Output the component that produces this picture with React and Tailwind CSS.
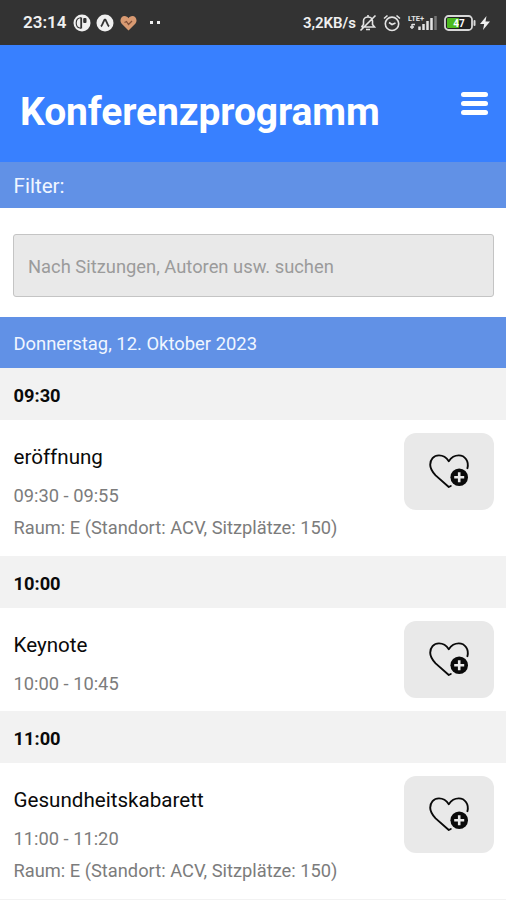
import React, { useState } from "react";

const slots = [
  {
    start: "09:30",
    title: "eröffnung",
    time: "09:30 - 09:55",
    room: "Raum: E (Standort: ACV, Sitzplätze: 150)",
  },
  {
    start: "10:00",
    title: "Keynote",
    time: "10:00 - 10:45",
  },
  {
    start: "11:00",
    title: "Gesundheitskabarett",
    time: "11:00 - 11:20",
    room: "Raum: E (Standort: ACV, Sitzplätze: 150)",
  },
];

const HeartPlus = () => (
  <svg className="-mt-[2px] ml-px" width="42" height="36" viewBox="0 0 42 36" fill="none">
    <path
      d="M38.4 15.2C40.2 8.5 36 2.4 29.8 2.4c-4.6 0-7.6 2.1-10 5.8C17.4 4.5 14.4 2.4 10 2.4 4.6 2.4 1.2 6.6 1.2 11.8c0 4.2 2.400 7.400 5.400 10.600L19.800 34l2-1"
      stroke="#0a0a0a"
      strokeWidth="1.9"
      strokeLinejoin="round"
      strokeLinecap="round"
    />
    <circle cx="30.2" cy="24.2" r="8.8" fill="#0a0a0a" />
    <path d="M30.2 19.2v10M25.2 24.2h10" stroke="#e9e9e9" strokeWidth="2.6" />
  </svg>
);

const StatusBar = () => (
  <div className="flex h-[45px] items-center bg-[#333333] pl-[23px] pr-4 text-[#f0f0f0]">
    <span className="w-[43px] whitespace-nowrap pt-px text-[17px] font-semibold">23:14</span>
    <svg className="ml-[7px]" width="18" height="18" viewBox="0 0 18 18">
      <circle cx="9" cy="9" r="8.5" fill="#f0f0f0" />
      <path d="M8 3.8C4 4 3.2 6.5 3.2 9s.8 5 4.8 5.2" stroke="#333" strokeWidth="1.1" fill="none" />
      <path d="M8.2 3.5v11" stroke="#333" strokeWidth="1.8" />
      <rect x="10.200" y="4" width="3.300" height="5" rx="1" fill="#333" />
    </svg>
    <svg className="ml-[5px]" width="18" height="18" viewBox="0 0 18 18">
      <circle cx="9" cy="9" r="8.5" fill="#f0f0f0" />
      <path d="M5 12.5C7 10.5 7.8 5.5 9 5.5s2 5 4 7" stroke="#333" strokeWidth="1.9" fill="none" />
    </svg>
    <svg className="ml-[6px]" width="17" height="16" viewBox="0 0 17 16">
      <path d="M8.5 15.5L1.5 8.5C-1 5 1.5 1 4.5 1c2 0 3.2 1 4 2.2C9.3 2 10.5 1 12.5 1c3 0 5.500 4 3 7.500z" fill="#d99a72" />
      <path d="M4.500 7.500l2-1 2 3 3.500-3.500" stroke="#805039" strokeWidth="1.300" fill="none" />
    </svg>
    <div className="ml-[13px] flex gap-[4px]">
      <span className="size-[3px] bg-[#f0f0f0]" />
      <span className="size-[3px] bg-[#f0f0f0]" />
    </div>

    <span className="ml-auto whitespace-nowrap pt-[2px] text-[15px] font-semibold">3,2KB/s</span>
    {/* muted bell */}
    <svg className="ml-[3px]" width="18" height="18" viewBox="0 0 18 18" fill="none" stroke="#e4e4e4" strokeWidth="1.6">
      <path d="M2.5 13h13L13.5 10.5V7c0-2.5-2-4-4.5-4S4.5 4.5 4.5 7v3.5L2.5 13M7 15.5h4M9 3V1M16.5 1.5l-15 15" />
    </svg>
    {/* alarm */}
    <svg className="ml-[6px]" width="18" height="18" viewBox="0 0 18 18" fill="none" stroke="#e4e4e4" strokeWidth="1.6">
      <circle cx="9" cy="9.8" r="6.7" />
      <path d="M6 8.5l3 2 3.5-1.5M1 4.5L4.5 1.5M17 4.5L13.5 1.5" />
    </svg>
    <svg className="ml-[7px]" width="30" height="18" viewBox="0 0 30 18">
      <text x="0" y="7" fontSize="8" fontWeight="700" fill="#e4e4e4" textLength="16" lengthAdjust="spacingAndGlyphs">LTE+</text>
      <path d="M4 10v5M4 10.5h3M2 13h4" stroke="#e4e4e4" strokeWidth="1.4" />
      <path d="M11.5 12.5V16M15.5 10V16M19.5 7V16M23.5 4V16" stroke="#e4e4e4" strokeWidth="2.5" />
      <path d="M27.5 2V16" stroke="#777" strokeWidth="2.5" />
    </svg>
    <svg className="ml-[6px]" width="32" height="18" viewBox="0 0 32 18">
      <rect x="1" y="2" width="27" height="14" rx="3.5" fill="#222" stroke="#d8d8d8" strokeWidth="1.8" />
      <rect x="3" y="4" width="12" height="10" rx="1" fill="#4dbb20" />
      <rect x="29.5" y="6" width="2" height="6" rx="1" fill="#d8d8d8" />
      <text x="15" y="12.7" textAnchor="middle" fontSize="10" fontWeight="700" fill="#fff">47</text>
    </svg>
    <svg className="ml-[4px]" width="10" height="14" viewBox="0 0 10 14">
      <path d="M6.5 0L0 8h4.2L3 14l7-8.5H5.5z" fill="#f0f0f0" />
    </svg>
  </div>
);

const App = () => {
  const [search, setSearch] = useState("");

  return (
    <div className="h-[900px] w-[506px] overflow-hidden bg-white font-['Roboto',sans-serif]">
      <StatusBar />

      {/* Header */}
      <header className="flex h-[117px] justify-between bg-[#3880ff] pl-5 pr-[18px] text-white">
        <h1 className="pt-[43px] text-[39px] font-bold leading-[48px] tracking-[-0.1px]">Konferenzprogramm</h1>
        <button type="button" aria-label="Menu" className="mt-[47px] flex h-[23px] w-[27px] flex-col justify-between">
          <span className="h-[5px] w-full rounded-sm bg-white" />
          <span className="h-[5px] w-full rounded-sm bg-white" />
          <span className="h-[5px] w-full rounded-sm bg-white" />
        </button>
      </header>

      <div className="flex h-[46px] items-center bg-[#6191e6] px-[13.5px] pt-[3px] text-[20.6px] text-[#f0f6ff]">
        Filter:
      </div>

      {/* Search */}
      <div className="h-[109px] px-[13px] pr-3 pt-[26px]">
        <input
          type="text"
          value={search}
          onChange={(e) => setSearch(e.target.value)}
          placeholder="Nach Sitzungen, Autoren usw. suchen"
          className="h-[63px] w-full rounded-[3px] border border-[#c4c4c4] bg-[#e9e9e9] px-[14px] pt-[2px] text-[18.35px] placeholder:text-[#9b9b9b]"
        />
      </div>

      <div className="flex h-[51px] items-center bg-[#6191e6] px-[13.5px] pt-[2px] text-[18.4px] text-[#f0f6ff]">
        Donnerstag, 12. Oktober 2023
      </div>

      {/* Sessions */}
      {slots.map((slot) => (
        <section key={slot.start}>
          <h2 className="flex h-[51.5px] items-center bg-[#f2f2f2] px-[13.5px] pt-[3px] text-[18.3px] font-bold text-[#0a0a0a]">
            {slot.start}
          </h2>
          <div className="flex items-start justify-between pb-[13px] pl-[13.5px] pr-3 pt-[13.5px]">
            <div className="-mb-1 pt-[10px]">
              <h3 className="text-[20.6px] leading-[28px] text-[#0a0a0a]">{slot.title}</h3>
              <p className="mt-[9px] text-[18.3px] leading-[32px] text-[#7c7c7c]">{slot.time}</p>
              {slot.room && <p className="pb-[3px] text-[18.3px] leading-[32px] text-[#7c7c7c]">{slot.room}</p>}
            </div>
            <button type="button" className="flex h-[77px] w-[90px] items-center justify-center rounded-[12px] bg-[#e9e9e9]">
              <HeartPlus />
            </button>
          </div>
        </section>
      ))}
      <div className="h-[52px] bg-[#f2f2f2]" />
    </div>
  );
};

export default App;
